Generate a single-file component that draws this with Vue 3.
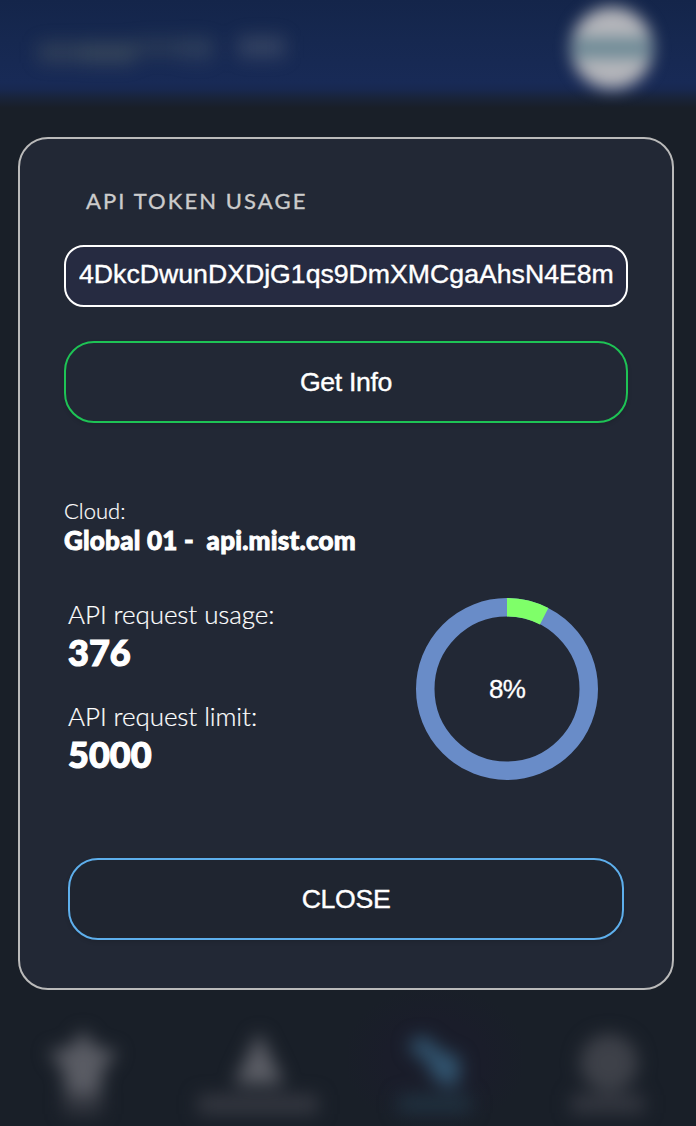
<script setup>
const token = '4DkcDwunDXDjG1qs9DmXMCgaAhsN4E8m'
const stats = [
  { label: 'API request usage:', value: 376 },
  { label: 'API request limit:', value: 5000 },
]
const percent = Math.round((stats[0].value / stats[1].value) * 100)
const share = (stats[0].value / stats[1].value) * 100
</script>

<template>
  <div class="page">
    <header class="topbar">
      <svg class="brand" width="320" height="98" viewBox="0 0 320 98" aria-hidden="true">
        <path d="M38 42h97v21H38z" fill="#8d9375" opacity=".2" />
        <path d="M82 43h52v22H82z" fill="#8d9375" opacity=".08" />
        <path d="M135 38h78v19h-78z" fill="#8d9375" opacity=".15" />
        <path d="M180 38h34v26h-34z" fill="#8d93a5" opacity=".06" />
        <path d="M238 36h47v22h-47z" fill="#8d9395" opacity=".24" />
      </svg>
      <svg class="avatar" width="120" height="98" viewBox="0 0 120 98" aria-hidden="true">
        <circle cx="60" cy="48" r="41" fill="#b5b6bb" />
        <rect x="22" y="38" width="76" height="20" fill="#6c8995" />
      </svg>
    </header>

    <main class="card">
      <h1 class="title">API TOKEN USAGE</h1>
      <input class="token" type="text" :value="token" spellcheck="false" />
      <button class="btn fetch">Get Info</button>

      <section class="cloud">
        <div class="cloud-label">Cloud:</div>
        <div class="cloud-name">Global 01 -&nbsp; api.mist.com</div>
      </section>

      <section class="usage">
        <div class="stats">
          <div v-for="s in stats" :key="s.label" class="stat">
            <div class="stat-label">{{ s.label }}</div>
            <div class="stat-value">{{ s.value }}</div>
          </div>
        </div>
        <div class="donut">
          <svg width="182" height="182" viewBox="0 0 182 182">
            <circle cx="91" cy="91" r="81.75" fill="none" stroke="#698cc8" stroke-width="18.5" />
            <circle cx="91" cy="91" r="81.75" fill="none" stroke="#7fff69" stroke-width="18.5"
              pathLength="100" :stroke-dasharray="`${share} 100`" transform="rotate(-90 91 91)" />
          </svg>
          <span class="percent">{{ percent }}%</span>
        </div>
      </section>

      <button class="btn close">CLOSE</button>
    </main>

    <nav class="tabs" aria-hidden="true">
      <div class="tab">
        <svg width="174" height="136" viewBox="0 0 174 136">
          <path d="M83 40l12 17 23 5-15 17-3 25H66l-3-25-15-17 23-5z" fill="#5a5c64" />
          <path d="M64 104h38v20H64z" fill="#33363f" />
        </svg>
      </div>
      <div class="tab">
        <svg width="174" height="136" viewBox="0 0 174 136">
          <path d="M85 42l25 52H60z" fill="#5c5e66" />
          <path d="M24 105h120v19H24z" fill="#353841" />
        </svg>
      </div>
      <div class="tab active">
        <svg width="174" height="136" viewBox="0 0 174 136">
          <path d="M62 51l14-5 18 15 18 7-1 25-12 4-15-11-5-15-16-10z" fill="#325570" />
          <path d="M50 105h73v18H50z" fill="#203240" />
        </svg>
      </div>
      <div class="tab">
        <svg width="174" height="136" viewBox="0 0 174 136">
          <circle cx="87" cy="73" r="29" fill="#3e4149" />
          <path d="M49 105h73v18H49z" fill="#353841" />
        </svg>
      </div>
    </nav>
  </div>
</template>

<style>
body {
  margin: 0;
  background: #191f28;
}
</style>

<style scoped>
.page {
  width: 696px;
  height: 1126px;
  overflow: hidden;
  display: flex;
  flex-direction: column;
  background: #191f28;
  color: #fff;
  font-family: Lato, sans-serif;
}
.topbar {
  height: 137px;
  flex: none;
  display: flex;
  justify-content: space-between;
  background: linear-gradient(#14254a 0, #162850 40px, #182a56 82px, #182850 89px, #19243a 98px, #191f28 108px);
}
.brand {
  filter: blur(9px);
}
.avatar {
  margin-right: 24px;
  filter: blur(8px);
}
.card {
  box-sizing: border-box;
  width: 656px;
  height: 853px;
  flex: none;
  margin-left: 18px;
  padding: 44px 44px 48px;
  border: 2px solid #bababa;
  border-radius: 30px;
  background: #222835;
  display: flex;
  flex-direction: column;
}
.title {
  margin: 4px 0 0 22px;
  font-size: 22px;
  line-height: 28px;
  font-weight: 400;
  letter-spacing: 2.1px;
  color: #ccc;
  -webkit-text-stroke: 0.35px #ccc;
}
.token {
  box-sizing: border-box;
  width: 564px;
  height: 62px;
  margin: 30px 0 0;
  padding: 0 12px 3px 13px;
  border: 2px solid #fff;
  border-radius: 20px;
  background: #262b41;
  color: #fff;
  font: 26.67px "Liberation Sans", Arial, sans-serif;
  -webkit-text-stroke: 0.4px #fff;
  outline: none;
}
.btn {
  box-sizing: border-box;
  height: 82px;
  padding: 0;
  border-radius: 30px;
  background: #222835;
  color: #fff;
  font: 26.67px "Liberation Sans", Arial, sans-serif;
  letter-spacing: -0.35px;
  -webkit-text-stroke: 0.4px #fff;
  box-shadow: 0 2px 4px rgba(0, 0, 0, 0.12);
}
.fetch {
  width: 564px;
  margin-top: 34px;
  border: 2px solid #1ec355;
}
.cloud {
  margin-top: 74px;
  height: 60px;
}
.cloud-label {
  font-size: 22px;
  line-height: 28px;
  font-weight: 300;
  -webkit-text-stroke: 0.2px #fff;
}
.cloud-name {
  margin-top: -1px;
  font-size: 26px;
  line-height: 32px;
  font-weight: 900;
  letter-spacing: 0.22px;
  white-space: nowrap;
  -webkit-text-stroke: 0.9px #fff;
}
.usage {
  display: flex;
  justify-content: space-between;
  margin-top: 41px;
  padding: 0 30px 0 4px;
}
.stats {
  margin-top: -1px;
}
.stat {
  height: 102px;
}
.stat-label {
  font-size: 26px;
  line-height: 34px;
  font-weight: 300;
  letter-spacing: -0.08px;
  -webkit-text-stroke: 0.2px #fff;
}
.stat-value {
  font-size: 36px;
  line-height: 42px;
  font-weight: 900;
  -webkit-text-stroke: 1.2px #fff;
}
.donut {
  display: grid;
  place-items: center;
  width: 182px;
  height: 182px;
}
.donut > * {
  grid-area: 1 / 1;
}
.percent {
  padding-top: 1px;
  font: 26px "Liberation Sans", Arial, sans-serif;
  letter-spacing: -0.8px;
  -webkit-text-stroke: 0.3px #fff;
}
.close {
  width: 556px;
  margin: auto 0 0 4px;
  border: 2px solid #5eafec;
  background: #1f2530;
}
.tabs {
  height: 136px;
  flex: none;
  display: flex;
}
.tab {
  width: 174px;
  height: 136px;
}
.tab svg {
  display: block;
  filter: blur(9px);
}
.active {
  background: radial-gradient(ellipse at center, #1a1d2a 40%, #191f28 75%);
}
</style>
